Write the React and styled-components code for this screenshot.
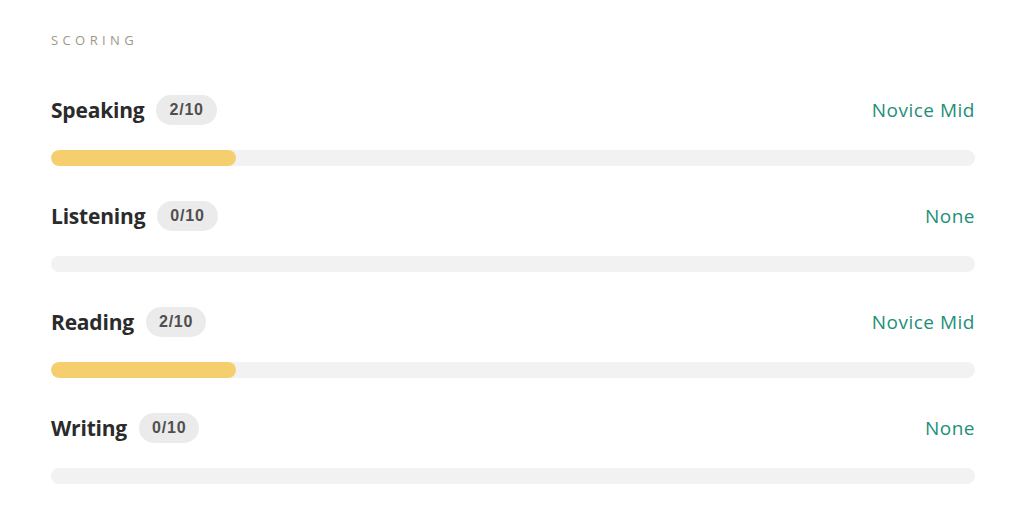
import React from 'react'
import styled, { createGlobalStyle } from 'styled-components'

const Global = createGlobalStyle`
    body {
        margin: 0;
        background: #ffffff;
        font-family: "Open Sans", "Noto Sans", sans-serif;
    }
`
const Wrapper = styled.section`
    width: 924px;
    padding: 32px 0 0 51px;
    display: flex;
    flex-direction: column;
`
const Heading = styled.div`
    font-size: 13px;
    line-height: 16px;
    letter-spacing: 4.4px;
    color: #9d9888;
    text-transform: uppercase;
    margin-bottom: 47px;
`
const Row = styled.div`
    display: flex;
    flex-direction: column;
    gap: 25px;
    margin-bottom: 35px;
`
const Header = styled.div`
    height: 30px;
    display: flex;
    align-items: center;
    justify-content: space-between;
`
const Left = styled.div`
    display: flex;
    align-items: center;
    gap: 12px;
`
const Title = styled.span`
    font-size: 21px;
    font-weight: 700;
    color: #2b2b2b;
    letter-spacing: -0.2px;
`
const Badge = styled.span`
    height: 30px;
    padding: 0 13px;
    border-radius: 15px;
    background: #ebebeb;
    color: #4f4f4f;
    font-family: "Liberation Sans", sans-serif;
    font-size: 16px;
    font-weight: 700;
    letter-spacing: 0.8px;
    display: flex;
    align-items: center;
`
const Level = styled.span`
    font-size: 19px;
    letter-spacing: 0.5px;
    color: #1e8f78;
`
const Track = styled.div`
    height: 16px;
    border-radius: 8px;
    background: #f2f2f2;
    overflow: hidden;
`
const Fill = styled.div`
    height: 100%;
    border-radius: 8px;
    background: #f5cf6d;
`

const skills = [
    {name: 'Speaking', score: 2, level: 'Novice Mid'},
    {name: 'Listening', score: 0, level: 'None'},
    {name: 'Reading', score: 2, level: 'Novice Mid'},
    {name: 'Writing', score: 0, level: 'None'},
]

const App = () => {
    return(
        <>
            <Global/>
            <Wrapper>
                <Heading>Scoring</Heading>
                {skills.map(s => (
                    <Row key={s.name}>
                        <Header>
                            <Left>
                                <Title>{s.name}</Title>
                                <Badge>{s.score}/10</Badge>
                            </Left>
                            <Level>{s.level}</Level>
                        </Header>
                        <Track>
                            {s.score > 0 && <Fill style={{width: `${s.score * 10}%`}}/>}
                        </Track>
                    </Row>
                ))}
            </Wrapper>
        </>
    )
}

export default App
